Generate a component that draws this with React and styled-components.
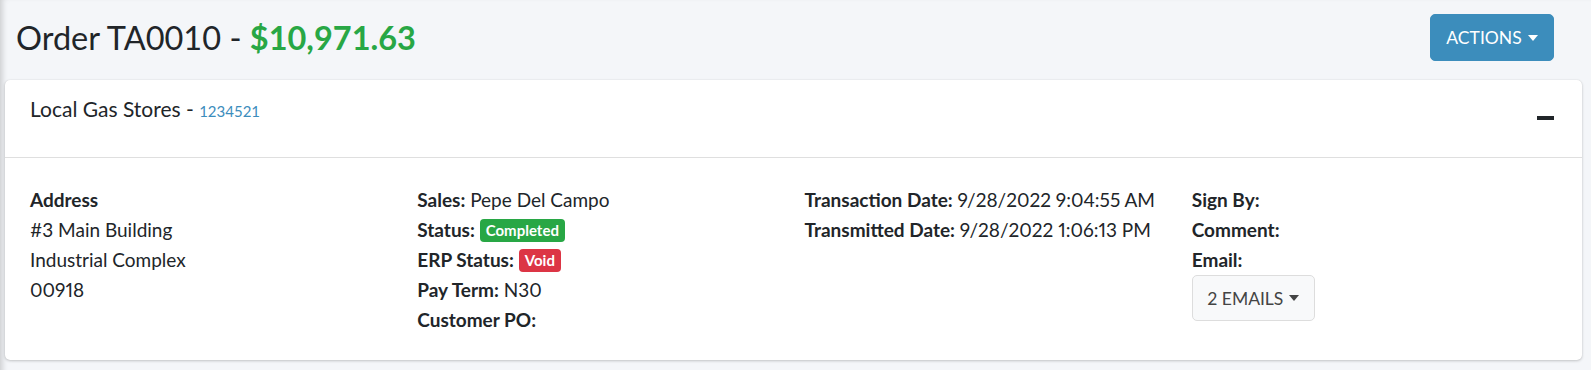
import React from 'react';
import styled, { createGlobalStyle } from 'styled-components';

const GlobalStyle = createGlobalStyle`
  html, body {
    margin: 0;
    padding: 0;
    background: #f4f6f9;
  }
  body {
    font-family: Lato, "Noto Sans", sans-serif;
    color: #212529;
    font-size: 20px;
    line-height: 1.5;
  }
`;

const Page = styled.div`
  min-height: 370px;
  background: #f4f6f9;
  box-shadow: inset 6px 0 6px -4px rgba(0, 0, 0, 0.18);
  padding-top: 14px;
`;

const HeaderBar = styled.div`
  display: flex;
  align-items: center;
  justify-content: space-between;
  padding: 0 37px 0 16px;
  height: 47px;
`;

const Title = styled.h1`
  margin: 0;
  font-size: 32.5px;
  font-weight: 400;
  line-height: 1.2;
`;

const Amount = styled.span`
  color: #28a745;
  font-weight: 700;
`;

const Caret = styled.span`
  display: inline-block;
  margin-left: 6px;
  vertical-align: 3px;
  border-top: 6px solid currentColor;
  border-left: 5px solid transparent;
  border-right: 5px solid transparent;
`;

const Button = styled.button`
  display: inline-flex;
  align-items: center;
  justify-content: center;
  height: ${(p) => p.height}px;
  width: ${(p) => p.width}px;
  font-family: inherit;
  font-size: 17.5px;
  text-transform: uppercase;
  border-radius: 5px;
  cursor: pointer;
  color: ${(p) => (p.primary ? '#fff' : '#444')};
  background: ${(p) => (p.primary ? '#3c8dbc' : '#f8f9fa')};
  border: 1px solid ${(p) => (p.primary ? '#3c8dbc' : '#ddd')};
  padding: 0;
`;

const Card = styled.div`
  margin: 19px 9px 0 5px;
  background: #fff;
  border-radius: 5px;
  box-shadow: 0 0 1px rgba(0, 0, 0, 0.125), 0 1px 3px rgba(0, 0, 0, 0.2);
`;

const CardHeader = styled.div`
  display: flex;
  justify-content: space-between;
  height: 78px;
  padding: 15px 28px 0 25px;
  box-sizing: border-box;
  border-bottom: 1px solid rgba(0, 0, 0, 0.125);
`;

const CardTitle = styled.div`
  font-size: 21px;
  line-height: 28px;
`;

const CustomerNo = styled.a`
  color: #3c8dbc;
  font-size: 15px;
  text-decoration: none;
`;

const Minus = styled.svg`
  margin-top: 21px;
`;

const CardBody = styled.div`
  display: grid;
  grid-template-columns: repeat(4, 1fr);
  padding: 27px 14px 25px;
`;

const Column = styled.div`
  padding: 0 11px;
  font-size: 19px;
  line-height: 30px;
  font-variant-numeric: proportional-nums;
`;

const Line = styled.div``;

const Label = styled.b`
  font-weight: 700;
`;

const Badge = styled.span`
  display: inline-block;
  font-size: 15px;
  font-weight: 700;
  line-height: 1;
  padding: 4px 6px;
  border-radius: 4px;
  color: #fff;
  background: ${(p) => p.bg};
  vertical-align: 1px;
`;

export default function App() {
  return (
    <>
      <GlobalStyle />
      <Page>
        <HeaderBar>
          <Title>
            Order TA0010 - <Amount>$10,971.63</Amount>
          </Title>
          <Button primary width={124} height={47}>
            Actions
            <Caret />
          </Button>
        </HeaderBar>
        <Card>
          <CardHeader>
            <CardTitle>
              Local Gas Stores - <CustomerNo href="#">1234521</CustomerNo>
            </CardTitle>
            <Minus width="17" height="4" viewBox="0 0 17 4">
              <rect width="17" height="4" fill="#212529" />
            </Minus>
          </CardHeader>
          <CardBody>
            <Column>
              <Line>
                <Label>Address</Label>
              </Line>
              <Line>#3 Main Building</Line>
              <Line>Industrial Complex</Line>
              <Line>00918</Line>
            </Column>
            <Column>
              <Line>
                <Label>Sales:</Label> Pepe Del Campo
              </Line>
              <Line>
                <Label>Status:</Label> <Badge bg="#28a745">Completed</Badge>
              </Line>
              <Line>
                <Label>ERP Status:</Label> <Badge bg="#dc3545">Void</Badge>
              </Line>
              <Line>
                <Label>Pay Term:</Label> N30
              </Line>
              <Line>
                <Label>Customer PO:</Label>
              </Line>
            </Column>
            <Column>
              <Line>
                <Label>Transaction Date:</Label> 9/28/2022 9:04:55 AM
              </Line>
              <Line>
                <Label>Transmitted Date:</Label> 9/28/2022 1:06:13 PM
              </Line>
            </Column>
            <Column>
              <Line>
                <Label>Sign By:</Label>
              </Line>
              <Line>
                <Label>Comment:</Label>
              </Line>
              <Line>
                <Label>Email:</Label>
              </Line>
              <Button width={123} height={46}>
                2 Emails
                <Caret />
              </Button>
            </Column>
          </CardBody>
        </Card>
      </Page>
    </>
  );
}
